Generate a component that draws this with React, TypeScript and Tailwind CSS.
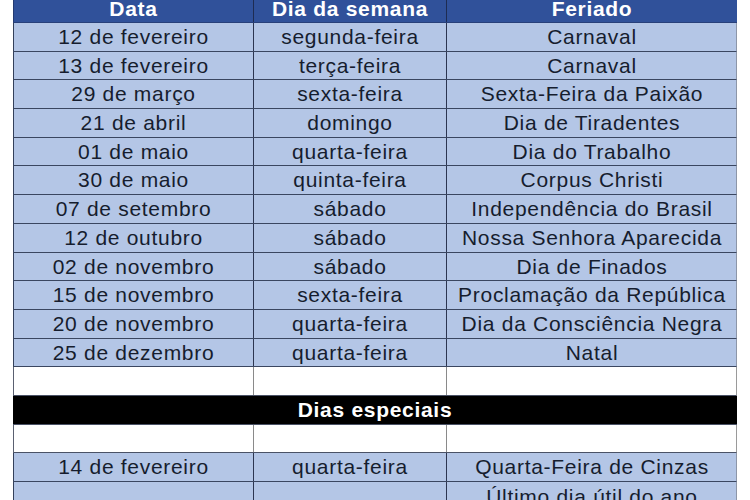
import React from "react";

const rows: [string, string, string][] = [
  ["12 de fevereiro", "segunda-feira", "Carnaval"],
  ["13 de fevereiro", "terça-feira", "Carnaval"],
  ["29 de março", "sexta-feira", "Sexta-Feira da Paixão"],
  ["21 de abril", "domingo", "Dia de Tiradentes"],
  ["01 de maio", "quarta-feira", "Dia do Trabalho"],
  ["30 de maio", "quinta-feira", "Corpus Christi"],
  ["07 de setembro", "sábado", "Independência do Brasil"],
  ["12 de outubro", "sábado", "Nossa Senhora Aparecida"],
  ["02 de novembro", "sábado", "Dia de Finados"],
  ["15 de novembro", "sexta-feira", "Proclamação da República"],
  ["20 de novembro", "quarta-feira", "Dia da Consciência Negra"],
  ["25 de dezembro", "quarta-feira", "Natal"],
];

function BlueRow({ cells }: { cells: [string, string, string] }) {
  return (
    <div className="grid grid-cols-[240px_193px_290px] h-[28.7px] bg-[#b4c6e6] border-b-[1.5px] border-[#3a4660] border-l-[1.5px] border-l-[#34405a] border-r border-r-[#8d96a8]">
      <div className="border-r-[1.5px] border-[#2c3550] text-center leading-[27px] overflow-hidden whitespace-nowrap">{cells[0]}</div>
      <div className="border-r-[1.5px] border-[#2c3550] text-center leading-[27px] overflow-hidden whitespace-nowrap">{cells[1]}</div>
      <div className="text-center leading-[27px] overflow-hidden whitespace-nowrap">{cells[2]}</div>
    </div>
  );
}

function WhiteRow() {
  return (
    <div className="grid grid-cols-[240px_193px_290px] h-[28.7px] bg-white border-b-[1.5px] border-[#4a5266] border-l-[1.5px] border-l-[#5a6070] border-r border-r-[#9a9a9a]">
      <div className="border-r-[1.5px] border-[#8a8a8a]" />
      <div className="border-r-[1.5px] border-[#8a8a8a]" />
      <div />
    </div>
  );
}

export default function App() {
  return (
    <div
      className="w-[750px] h-[500px] overflow-hidden bg-white pl-[13px] text-[#161d2e] text-[21px] tracking-[0.7px]"
      style={{ fontFamily: '"Liberation Sans", Arial, sans-serif' }}
    >
      <div className="w-[724px]">
        <div className="-mt-[4px] grid grid-cols-[240px_193px_290px] h-[27px] bg-[#30519a] text-white font-bold border-b border-[#28407a] border-l-[1.5px] border-l-[#243a70]">
          <div className="border-r-[1.5px] border-[#1e2c52] text-center leading-[26px]">Data</div>
          <div className="border-r-[1.5px] border-[#1e2c52] text-center leading-[26px]">Dia da semana</div>
          <div className="text-center leading-[26px]">Feriado</div>
        </div>
        {rows.map((r, i) => (
          <BlueRow key={i} cells={r} />
        ))}
        <WhiteRow />
        <div className="h-[28.7px] bg-black text-white font-bold text-center leading-[28px] border-b-[1.5px] border-[#4a5266]">
          Dias especiais
        </div>
        <WhiteRow />
        <BlueRow cells={["14 de fevereiro", "quarta-feira", "Quarta-Feira de Cinzas"]} />
        <div className="grid grid-cols-[240px_193px_290px] h-[58px] bg-[#b4c6e6] border-l-[1.5px] border-l-[#34405a] border-r border-r-[#8d96a8]">
          <div className="border-r-[1.5px] border-[#2c3550]" />
          <div className="border-r-[1.5px] border-[#2c3550]" />
          <div className="text-center leading-[27px] pt-[1px]">Último dia útil do ano</div>
        </div>
      </div>
    </div>
  );
}
